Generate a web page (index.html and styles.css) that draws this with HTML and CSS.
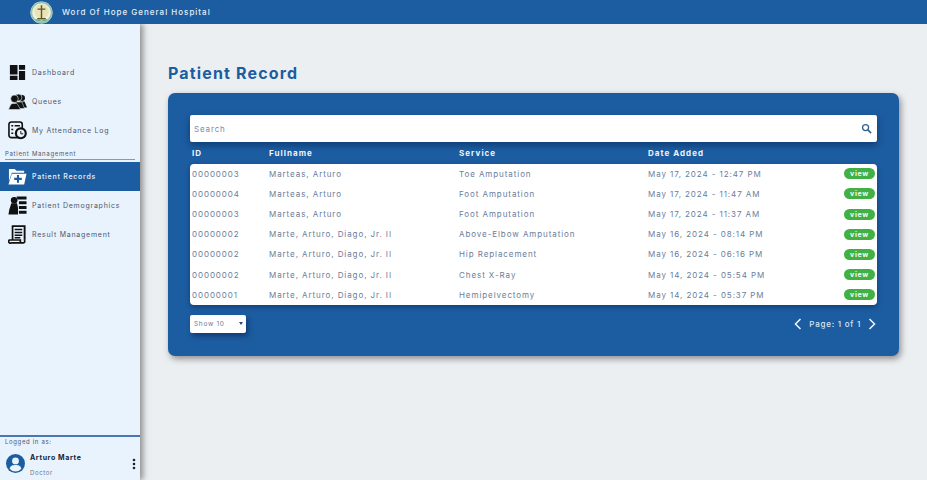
FILE: index.html
```html
<!DOCTYPE html>
<html lang="en">
<head>
<meta charset="utf-8">
<title>Patient Record</title>
<link rel="stylesheet" href="styles.css">
</head>
<body>
<header class="topbar">
  <svg class="logo" viewBox="0 0 24 24"><circle cx="12" cy="12" r="11.5" fill="#f3f1dc"/><circle cx="12" cy="12" r="10.5" fill="none" stroke="#8fc4b4" stroke-width="1.6"/><circle cx="12" cy="11" r="7.5" fill="#e9e3b8"/><path d="M12 4.5v14M8 8.500h8M7.500 18.500h9" stroke="#5b5a2a" stroke-width="1.5" fill="none"/><path d="M6 19.500q6 3 12 0" stroke="#4f9a7a" fill="none"/></svg>
  <span class="brand">Word Of Hope General Hospital</span>
</header>
<div class="shell">
  <aside class="sidebar">
    <nav class="nav">
      <a class="item"><svg class="ico" viewBox="-1 -1 20 20"><path d="M1 1h8v10H1zM10.500 1H17v5h-6.500zM10.500 7.500H17V17h-6.500zM1 12.500h8V17H1z" fill="#111"/></svg><span>Dashboard</span></a>
      <a class="item"><svg class="ico" viewBox="0 0 19 19"><g fill="#111"><circle cx="14" cy="6" r="3"/><path d="M11.500 9.500h5L19 15.500h-4z"/><circle cx="10.500" cy="5.500" r="3.400" stroke="#e8f3fe" stroke-width=".6"/><path d="M7 10h7l2.500 6.500H9z" stroke="#e8f3fe" stroke-width=".5"/><circle cx="6.500" cy="6.800" r="3.800" stroke="#e8f3fe" stroke-width=".6"/><path d="M4 11.500h5l1 1.500 2.500 4.500H.5L2.500 13z" stroke="#e8f3fe" stroke-width=".5"/></g></svg><span>Queues</span></a>
      <a class="item"><svg class="ico" viewBox="0 0 20 20"><rect x="1" y="1" width="14" height="16.500" rx="2.500" fill="none" stroke="#111" stroke-width="1.700"/><path d="M3.500 5h2M7 5h5.500M3.500 9h2M3.500 13h2" stroke="#111" stroke-width="1.600"/><circle cx="13.500" cy="13" r="6.300" fill="#111"/><circle cx="13.500" cy="13" r="4" fill="#e8f3fe"/><path d="M13.500 10.500V13.500h2.500" stroke="#111" fill="none"/></svg><span>My Attendance Log</span></a>
      <div class="section">Patient Management</div>
      <a class="item active"><svg class="ico" viewBox="0 0 20 18"><path d="M1 3V1h6l2 2h8v2H4L1 14z" fill="#fff"/><path d="M4 6h15.500L17 17.500H.5z" fill="#fff"/><path d="M10.500 7.500v8M6.500 11.500h8" stroke="#1c5ca0" stroke-width="2.200"/></svg><span>Patient Records</span></a>
      <a class="item"><svg class="ico" viewBox="0 0 20 20"><g fill="#111"><circle cx="6.500" cy="4.500" r="3.500"/><path d="M3.500 7.500h6L10.500 12v7.500H.5l.8-5z"/><path d="M9 .5h10.500v3.200H10zM11.500 5.500h8v3.200h-8zM11.500 10.500h8v3.200h-8zM11.500 15.500h8v3.200h-8z"/></g></svg><span>Patient Demographics</span></a>
      <a class="item"><svg class="ico" viewBox="0 0 20 20"><path d="M4 1.200h13.500v14" fill="none" stroke="#111" stroke-width="2"/><path d="M4.800 1.200V16M1.500 15.800h11.500v3H3.500a1.500 1.500 0 0 1-2-3zM13 18.800h3a1.500 1.500 0 0 0 1.500-2V15" fill="none" stroke="#111" stroke-width="1.800"/><path d="M7 4.800h8M7 7.800h8M7 10.800h8M7 13.400h6" stroke="#111" stroke-width="1.600"/></svg><span>Result Management</span></a>
    </nav>
    <footer class="account">
      <div class="logged">Logged in as:</div>
      <div class="user">
        <svg class="avatar" viewBox="0 0 20 20"><circle cx="10" cy="10" r="10" fill="#1c5ca0"/><circle cx="10" cy="7.300" r="3.600" fill="#e8f3fe"/><path d="M3.800 15.500C4.500 12 7 11.500 10 11.500s5.500.5 6.200 4a8 8 0 0 1-12.400 0z" fill="#e8f3fe"/></svg>
        <div class="who"><div class="name">Arturo Marte</div><div class="role">Doctor</div></div>
        <svg class="dots" viewBox="0 0 4 12"><circle cx="2" cy="2" r="1.300"/><circle cx="2" cy="6" r="1.300"/><circle cx="2" cy="10" r="1.300"/></svg>
      </div>
    </footer>
  </aside>
  <main class="content">
    <h1 class="title">Patient Record</h1>
    <section class="panel">
      <div class="search"><span>Search</span>
        <svg class="lens" viewBox="0 0 12 12"><circle cx="5" cy="5" r="3.300" fill="none" stroke="#2f6299" stroke-width="1.400"/><path d="M7.500 7.500L11 11" stroke="#2f6299" stroke-width="1.700"/></svg>
      </div>
      <div class="row heads"><span>ID</span><span>Fullname</span><span>Service</span><span>Date Added</span></div>
      <div class="table">
        <div class="row"><span>00000003</span><span>Marteas, Arturo</span><span>Toe Amputation</span><span>May 17, 2024 - 12:47 PM</span><a class="view">view</a></div>
        <div class="row"><span>00000004</span><span>Marteas, Arturo</span><span>Foot Amputation</span><span>May 17, 2024 - 11:47 AM</span><a class="view">view</a></div>
        <div class="row"><span>00000003</span><span>Marteas, Arturo</span><span>Foot Amputation</span><span>May 17, 2024 - 11:37 AM</span><a class="view">view</a></div>
        <div class="row"><span>00000002</span><span>Marte, Arturo, Diago, Jr. II</span><span>Above-Elbow Amputation</span><span>May 16, 2024 - 08:14 PM</span><a class="view">view</a></div>
        <div class="row"><span>00000002</span><span>Marte, Arturo, Diago, Jr. II</span><span>Hip Replacement</span><span>May 16, 2024 - 06:16 PM</span><a class="view">view</a></div>
        <div class="row"><span>00000002</span><span>Marte, Arturo, Diago, Jr. II</span><span>Chest X-Ray</span><span>May 14, 2024 - 05:54 PM</span><a class="view">view</a></div>
        <div class="row"><span>00000001</span><span>Marte, Arturo, Diago, Jr. II</span><span>Hemipelvectomy</span><span>May 14, 2024 - 05:37 PM</span><a class="view">view</a></div>
      </div>
      <div class="controls">
        <div class="show"><span>Show 10</span><i class="caret"></i></div>
        <div class="pager">
          <svg class="chev" viewBox="0 0 8 12"><path d="M6.500 1L1.500 6l5 5" fill="none" stroke="#eaf2fb" stroke-width="1.600"/></svg>
          <span>Page: 1 of 1</span>
          <svg class="chev" viewBox="0 0 8 12"><path d="M1.500 1l5 5-5 5" fill="none" stroke="#eaf2fb" stroke-width="1.600"/></svg>
        </div>
      </div>
    </section>
  </main>
</div>
</body>
</html>
```
FILE: styles.css
```css
* { box-sizing: border-box; }
html, body { height: 100%; }
body {
  margin: 0;
  height: 480px;
  overflow: hidden;
  display: flex;
  flex-direction: column;
  background: #eceff1;
  font-family: "Inter", "Open Sans", "Liberation Sans", sans-serif;
  color: #6a7d9a;
}
.topbar {
  height: 24px;
  flex: none;
  display: flex;
  align-items: center;
  padding-left: 30px;
  background: #1c5ca0;
  position: relative;
  z-index: 3;
}
.logo { width: 23px; height: 23px; }
.brand {
  margin-left: 9px;
  color: #e4eef9;
  font-size: 8px;
  font-weight: 500;
  letter-spacing: 1px;
}
.shell { flex: 1; display: flex; min-height: 0; }
.sidebar {
  width: 140px;
  flex: none;
  display: flex;
  flex-direction: column;
  justify-content: space-between;
  background: #e8f3fe;
  box-shadow: 3px 0 6px rgba(60, 60, 60, 0.55);
  position: relative;
  z-index: 2;
}
.nav { padding-top: 34px; }
.item {
  height: 29px;
  display: flex;
  align-items: center;
  padding-left: 8px;
  font-size: 7px;
  letter-spacing: 0.76px;
  color: #4d566c;
}
.ico { width: 19px; height: 19px; margin-right: 5px; flex: none; }
.active { background: #1c5ca0; color: #e8f1fb; font-weight: 500; }
.section {
  height: 14px;
  margin: 1px 5px 2px;
  padding-top: 4px;
  font-size: 6px;
  letter-spacing: 0.7px;
  line-height: 8px;
  border-bottom: 1px solid #7b9cc4;
  color: #4d566c;
}
.account { height: 45px; border-top: 2px solid #4a78ad; padding: 0 4px 0 5px; }
.logged { font-size: 6px; letter-spacing: 0.65px; line-height: 9px; color: #4d566c; }
.user { display: flex; align-items: center; margin-top: 4px; }
.avatar { width: 19px; height: 19px; margin-right: 5px; margin-left: 1px; }
.who { flex: 1; padding-top: 2px; }
.name { font-size: 7px; font-weight: 700; letter-spacing: 0.62px; color: #1b2230; line-height: 11px; }
.role { font-size: 6px; letter-spacing: 0.65px; color: #6b7488; margin-top: 6px; line-height: 8px; }
.dots { width: 4px; height: 12px; fill: #1b2230; }
.content { flex: 1; padding: 38px 28px 0; min-width: 0; }
.title {
  margin: 0;
  font-size: 16px;
  line-height: 22px;
  font-weight: 700;
  letter-spacing: 1.15px;
  color: #1c5ca0;
}
.panel {
  margin-top: 9px;
  height: 263px;
  padding: 22px;
  background: #1c5ca0;
  border-radius: 7px;
  box-shadow: 2px 3px 6px rgba(50, 50, 50, 0.5);
}
.search {
  height: 27px;
  display: flex;
  align-items: center;
  justify-content: space-between;
  padding: 0 5px 0 4px;
  background: #fff;
  border-radius: 2px;
  font-size: 8px;
  letter-spacing: 0.85px;
  color: #7b8aa3;
  box-shadow: 0 3px 6px rgba(0, 30, 70, 0.5);
}
.lens { width: 11px; height: 11px; }
.row {
  display: grid;
  grid-template-columns: 77px 190px 189px 1fr auto;
  align-items: center;
  padding: 0 2px;
  font-size: 8px;
  letter-spacing: 0.92px;
  height: 20.200px;
}
.heads {
  height: 21.600px;
  color: #eef4fb;
  font-weight: 700;
  letter-spacing: 1.05px;
}
.table {
  height: 141.400px;
  background: #fff;
  border-radius: 4px;
  box-shadow: 0 2px 5px rgba(0, 30, 70, 0.45);
}
.view {
  width: 31px;
  height: 11px;
  background: #41b045;
  border-radius: 6px;
  color: #f1fbf0;
  font-size: 7px;
  font-weight: 700;
  line-height: 11px;
  text-align: center;
  letter-spacing: 0.7px;
}
.controls {
  display: flex;
  justify-content: space-between;
  align-items: center;
  margin-top: 10px;
}
.show {
  width: 56px;
  height: 18px;
  display: flex;
  align-items: center;
  justify-content: space-between;
  padding: 0 3px 0 4px;
  background: #fff;
  border-radius: 2px;
  font-size: 6.500px;
  letter-spacing: 0.7px;
  color: #6a7d9a;
  box-shadow: 2px 3px 5px rgba(0, 30, 70, 0.5);
}
.caret {
  width: 0;
  height: 0;
  border: 2.500px solid transparent;
  border-top: 3px solid #2d4a70;
  border-bottom: 0;
}
.pager {
  display: flex;
  align-items: center;
  gap: 7px;
  margin-right: 1px;
  color: #dbe7f4;
  font-size: 8px;
  font-weight: 500;
  letter-spacing: 0.75px;
}
.chev { width: 8px; height: 12px; }
```
